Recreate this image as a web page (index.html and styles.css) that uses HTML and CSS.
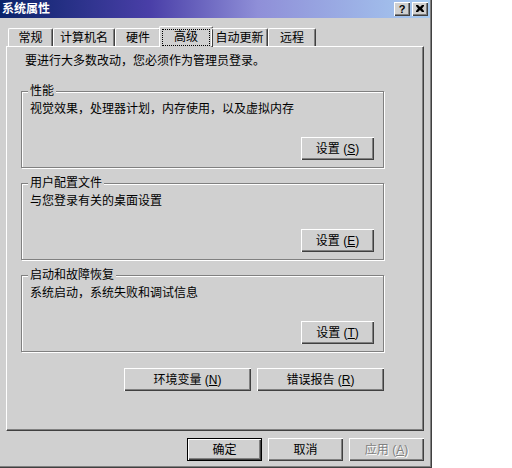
FILE: index.html
```html
<!DOCTYPE html>
<html lang="zh-CN">

<head>
    <meta charset="UTF-8">
    <title>系统属性</title>
    <link rel="stylesheet" href="styles.css">
</head>

<body>

    <div class="window">

        <div class="titlebar">
            <span class="title">系统属性</span>
            <div class="caption-buttons">
                <span class="cap-btn">?</span>
                <span class="cap-btn">
                    <svg width="8" height="7" viewBox="0 0 8 7">
                        <path d="M0 0h2l2 2 2-2h2v1l-2 2.5 2 2.5v1h-2l-2-2-2 2h-2v-1l2-2.5-2-2.5z" fill="#000" />
                    </svg>
                </span>
            </div>
        </div>

        <nav class="tabs">
            <span class="tab tab-general">常规</span>
            <span class="tab tab-name">计算机名</span>
            <span class="tab tab-hw">硬件</span>
            <span class="tab tab-adv active"><span class="focus">高级</span></span>
            <span class="tab tab-update">自动更新</span>
            <span class="tab tab-remote">远程</span>
        </nav>

        <section class="panel">
            <p class="note">要进行大多数改动，您必须作为管理员登录。</p>

            <fieldset class="group">
                <legend>性能</legend>
                <p class="desc">视觉效果，处理器计划，内存使用，以及虚拟内存</p>
                <div class="group-actions">
                    <button class="btn">设置 (<u>S</u>)</button>
                </div>
            </fieldset>

            <fieldset class="group">
                <legend>用户配置文件</legend>
                <p class="desc">与您登录有关的桌面设置</p>
                <div class="group-actions">
                    <button class="btn">设置 (<u>E</u>)</button>
                </div>
            </fieldset>

            <fieldset class="group">
                <legend>启动和故障恢复</legend>
                <p class="desc">系统启动，系统失败和调试信息</p>
                <div class="group-actions">
                    <button class="btn">设置 (<u>T</u>)</button>
                </div>
            </fieldset>

            <div class="env-actions">
                <button class="btn wide">环境变量 (<u>N</u>)</button>
                <button class="btn wide">错误报告 (<u>R</u>)</button>
            </div>
        </section>

        <div class="dialog-actions">
            <button class="btn default">确定</button>
            <button class="btn">取消</button>
            <button class="btn disabled">应用 (<u>A</u>)</button>
        </div>

    </div>

</body>

</html>
```

FILE: styles.css
```css
body {
    margin: 0;
    background-color: white;
    font-family: "Liberation Sans", "Noto Sans CJK SC", sans-serif;
    font-size: 12px;
    color: black;
}

.window {
    width: 432px;
    height: 468px;
    box-sizing: border-box;
    background-color: #d0d0d0;
    box-shadow: inset -1px -1px 0 #404040, inset -2px -2px 0 #808080;
    display: flex;
    flex-direction: column;
}

.titlebar {
    height: 18px;
    margin-right: 2px;
    padding-left: 2px;
    background: linear-gradient(to right, #0a246a, #4a3fa8 35%, #8f8fd8 60%, #a6caf0);
    display: flex;
    align-items: center;
    justify-content: space-between;
}

.title {
    color: white;
    font-weight: bold;
    font-size: 12px;
    line-height: 14px;
}

.caption-buttons {
    display: flex;
    gap: 2px;
    padding-right: 2px;
}

.cap-btn {
    width: 16px;
    height: 14px;
    box-sizing: border-box;
    background-color: #d0d0d0;
    box-shadow: inset 1px 1px 0 #fff, inset -1px -1px 0 #404040, inset -2px -2px 0 #808080;
    display: flex;
    align-items: center;
    justify-content: center;
    font-weight: bold;
    font-size: 11px;
    line-height: 12px;
    padding-bottom: 1px;
}

/* tabs */
.tabs {
    display: flex;
    align-items: flex-end;
    height: 20px;
    margin-top: 8px;
    padding-left: 8px;
    position: relative;
    z-index: 1;
}

.tab {
    height: 18px;
    box-sizing: border-box;
    border-top: 1px solid #fff;
    border-left: 1px solid #fff;
    border-right: 1px solid #404040;
    box-shadow: inset -1px 0 0 #808080;
    border-radius: 2px 2px 0 0;
    display: flex;
    align-items: center;
    justify-content: center;
    line-height: 14px;
    padding-top: 1px;
}

.tab-general { width: 45px; }
.tab-name { width: 62px; }
.tab-hw { width: 46px; }
.tab-adv { width: 50px; }
.tab-update { width: 57px; }
.tab-remote { width: 48px; }

.tab.active {
    height: 21px;
    width: 54px;
    margin: 0 -2px -1px;
    background-color: #d0d0d0;
}

.focus {
    outline: 1px dotted black;
    padding: 0 11px;
    line-height: 15px;
}

/* panel */
.panel {
    width: 418px;
    height: 385px;
    box-sizing: border-box;
    margin-left: 6px;
    border: 1px solid;
    border-color: #fff #404040 #404040 #fff;
    box-shadow: inset -1px -1px 0 #808080;
    padding: 7px 0 0 14px;
}

.note {
    margin: 0 0 16px 4px;
    line-height: 14px;
}

.group {
    width: 363px;
    box-sizing: border-box;
    margin: 0 0 8px 0;
    padding: 4px 9px 7px 8px;
    border: 1px solid #808080;
    box-shadow: inset 1px 1px 0 #fff, 1px 1px 0 #fff;
    min-inline-size: 0;
}

.group legend {
    margin-left: -2px;
    padding: 0 2px;
    line-height: 14px;
    background-color: #d0d0d0;
}

.desc {
    margin: 0;
    line-height: 14px;
}

.group-actions {
    display: flex;
    justify-content: flex-end;
    margin-top: 21px;
}

.env-actions {
    width: 363px;
    display: flex;
    justify-content: flex-end;
    gap: 6px;
    margin-top: 16px;
}

.dialog-actions {
    display: flex;
    justify-content: flex-end;
    gap: 6px;
    margin-top: 7px;
    padding-right: 8px;
}

/* buttons */
.btn {
    width: 73px;
    height: 23px;
    box-sizing: border-box;
    border: none;
    padding: 0;
    background-color: #d0d0d0;
    box-shadow: inset 1px 1px 0 #fff, inset -1px -1px 0 #404040, inset -2px -2px 0 #808080;
    font-family: inherit;
    font-size: 12px;
    color: black;
    line-height: 14px;
}

.btn.wide {
    width: 127px;
}

.dialog-actions .btn {
    width: 75px;
}

.btn.default {
    border: 1px solid black;
}

.btn.disabled {
    color: #808080;
    text-shadow: 1px 1px 0 #fff;
}
```
